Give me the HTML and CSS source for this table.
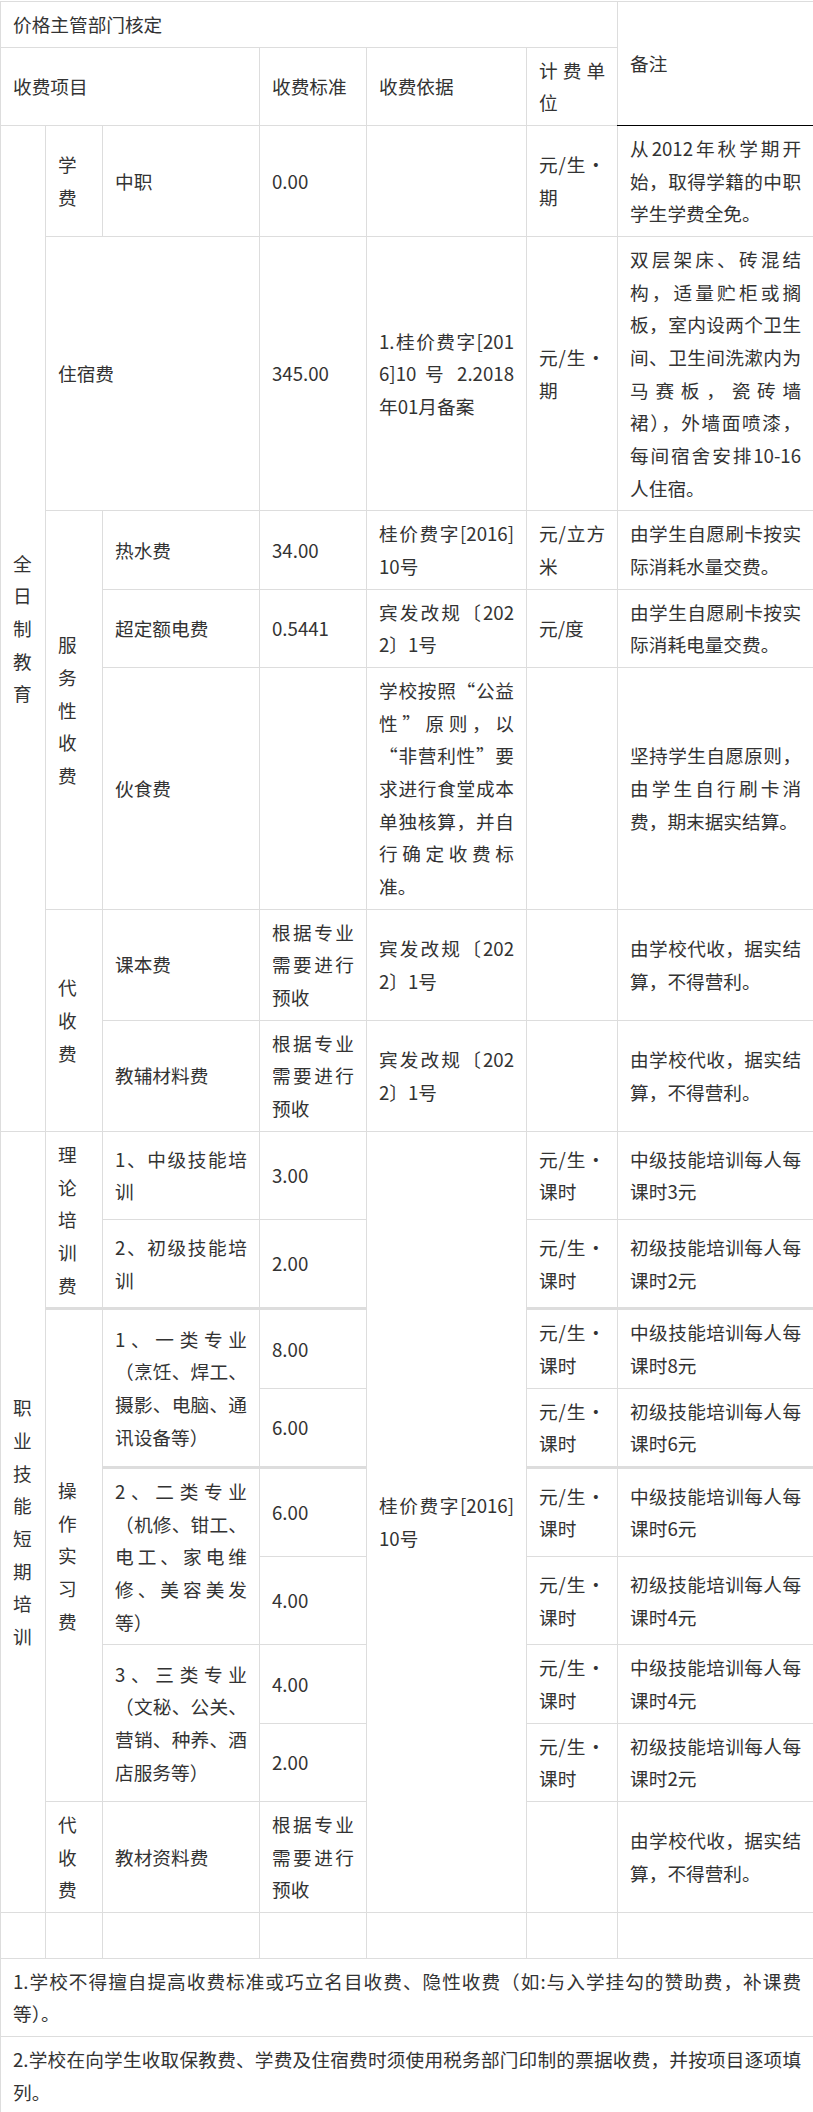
FILE: index.html
```html
<!DOCTYPE html>
<html lang="zh-CN">
<head>
<meta charset="utf-8">
<title>收费公示</title>
<link rel="stylesheet" href="styles.css">
</head>
<body>
<table class="fee">
  <colgroup>
    <col class="c1"><col class="c2"><col class="c3"><col class="c4"><col class="c5"><col class="c6"><col class="c7">
  </colgroup>
  <tbody>
    <tr>
      <td colspan="6">价格主管部门核定</td>
      <td rowspan="2" class="bk">备注</td>
    </tr>
    <tr>
      <td colspan="3">收费项目</td>
      <td>收费标准</td>
      <td>收费依据</td>
      <td>计费单位</td>
    </tr>
    <tr>
      <td rowspan="7">全日制教育</td>
      <td>学费</td>
      <td>中职</td>
      <td>0.00</td>
      <td></td>
      <td>元/生•期</td>
      <td>从2012年秋学期开始，取得学籍的中职学生学费全免。</td>
    </tr>
    <tr>
      <td colspan="2">住宿费</td>
      <td>345.00</td>
      <td>1.桂价费字[2016]10 号 2.2018年01月备案</td>
      <td>元/生•期</td>
      <td>双层架床、砖混结构，适量贮柜或搁板，室内设两个卫生间、卫生间洗漱内为马赛板，瓷砖墙裙），外墙面喷漆，每间宿舍安排10-16人住宿。</td>
    </tr>
    <tr>
      <td rowspan="3">服务性收费</td>
      <td>热水费</td>
      <td>34.00</td>
      <td>桂价费字[2016]10号</td>
      <td>元/立方米</td>
      <td>由学生自愿刷卡按实际消耗水量交费。</td>
    </tr>
    <tr>
      <td>超定额电费</td>
      <td>0.5441</td>
      <td>宾发改规〔2022〕1号</td>
      <td>元/度</td>
      <td>由学生自愿刷卡按实际消耗电量交费。</td>
    </tr>
    <tr>
      <td>伙食费</td>
      <td></td>
      <td>学校按照“公益性”原则，以“非营利性”要求进行食堂成本单独核算，并自行确定收费标准。</td>
      <td></td>
      <td>坚持学生自愿原则，由学生自行刷卡消费，期末据实结算。</td>
    </tr>
    <tr>
      <td rowspan="2">代收费</td>
      <td>课本费</td>
      <td>根据专业需要进行预收</td>
      <td>宾发改规〔2022〕1号</td>
      <td></td>
      <td>由学校代收，据实结算，不得营利。</td>
    </tr>
    <tr>
      <td>教辅材料费</td>
      <td>根据专业需要进行预收</td>
      <td>宾发改规〔2022〕1号</td>
      <td></td>
      <td>由学校代收，据实结算，不得营利。</td>
    </tr>
    <tr>
      <td rowspan="9">职业技能短期培训</td>
      <td rowspan="2">理论培训费</td>
      <td>1、中级技能培训</td>
      <td>3.00</td>
      <td rowspan="9">桂价费字[2016]10号</td>
      <td>元/生•课时</td>
      <td>中级技能培训每人每课时3元</td>
    </tr>
    <tr>
      <td>2、初级技能培训</td>
      <td>2.00</td>
      <td>元/生•课时</td>
      <td>初级技能培训每人每课时2元</td>
    </tr>
    <tr>
      <td rowspan="6" class="tk">操作实习费</td>
      <td rowspan="2" class="tk">1、一类专业（烹饪、焊工、摄影、电脑、通讯设备等）</td>
      <td class="tk">8.00</td>
      <td class="tk">元/生•课时</td>
      <td class="tk">中级技能培训每人每课时8元</td>
    </tr>
    <tr>
      <td>6.00</td>
      <td>元/生•课时</td>
      <td>初级技能培训每人每课时6元</td>
    </tr>
    <tr>
      <td rowspan="2" class="tk">2、二类专业（机修、钳工、电工、家电维修、美容美发等）</td>
      <td class="tk">6.00</td>
      <td class="tk">元/生•课时</td>
      <td class="tk">中级技能培训每人每课时6元</td>
    </tr>
    <tr>
      <td>4.00</td>
      <td>元/生•课时</td>
      <td>初级技能培训每人每课时4元</td>
    </tr>
    <tr>
      <td rowspan="2">3、三类专业（文秘、公关、营销、种养、酒店服务等）</td>
      <td>4.00</td>
      <td>元/生•课时</td>
      <td>中级技能培训每人每课时4元</td>
    </tr>
    <tr>
      <td>2.00</td>
      <td>元/生•课时</td>
      <td>初级技能培训每人每课时2元</td>
    </tr>
    <tr>
      <td>代收费</td>
      <td>教材资料费</td>
      <td>根据专业需要进行预收</td>
      <td></td>
      <td>由学校代收，据实结算，不得营利。</td>
    </tr>
    <tr>
      <td>&nbsp;</td><td>&nbsp;</td><td>&nbsp;</td><td>&nbsp;</td><td>&nbsp;</td><td>&nbsp;</td><td>&nbsp;</td>
    </tr>
    <tr>
      <td colspan="7">1.学校不得擅自提高收费标准或巧立名目收费、隐性收费（如:与入学挂勾的赞助费，补课费等）。</td>
    </tr>
    <tr>
      <td colspan="7">2.学校在向学生收取保教费、学费及住宿费时须使用税务部门印制的票据收费，并按项目逐项填列。</td>
    </tr>
  </tbody>
</table>
</body>
</html>
```

FILE: styles.css
```css
html, body {
  margin: 0;
  padding: 0;
  background: #fff;
}

.fee {
  width: 813px;
  margin-top: 1px;
  border-collapse: collapse;
  table-layout: fixed;
  font-family: "Noto Sans CJK SC", "Noto Sans", sans-serif;
  font-size: 18.667px;
  line-height: 32.667px;
  color: #333;
}

.c1 { width: 45px; }
.c2 { width: 57px; }
.c3 { width: 157px; }
.c4 { width: 107px; }
.c5 { width: 160px; }
.c6 { width: 91px; }
.c7 { width: 196px; }

.fee td {
  border: 1px solid #ddd;
  padding: 6px 12px;
  vertical-align: middle;
  text-align: justify;
  word-break: break-all;
}

.fee td.tk {
  border-top: 3px solid #ddd;
}

.fee td.bk {
  border-bottom: 1px solid #000;
}
```
